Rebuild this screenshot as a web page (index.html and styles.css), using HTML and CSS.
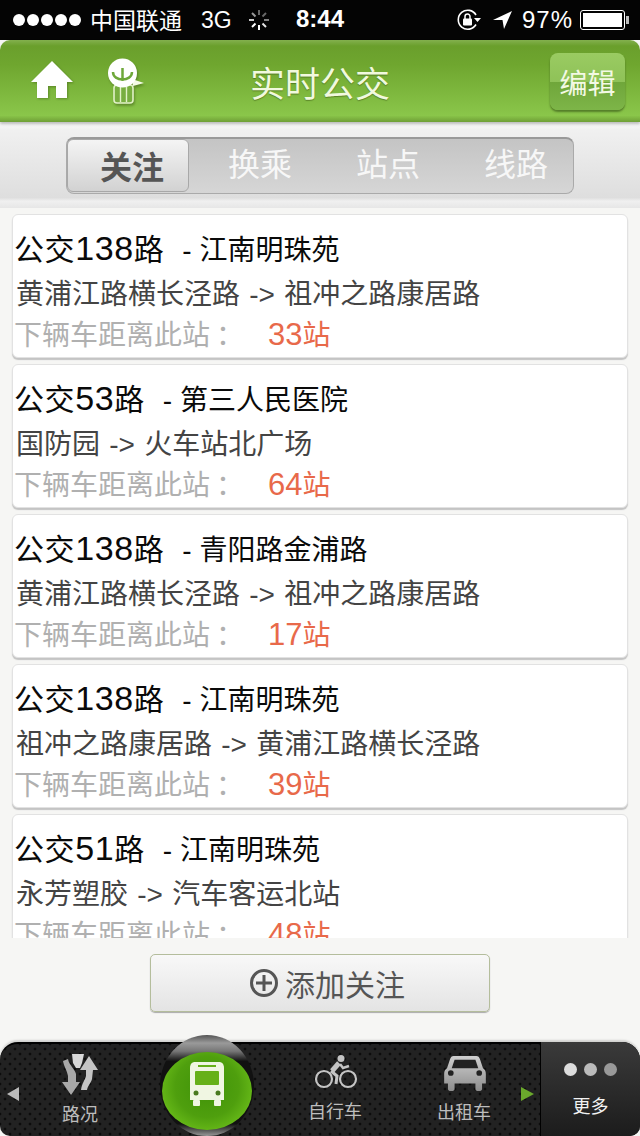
FILE: index.html
```html
<!DOCTYPE html>
<html lang="zh-CN">
<head>
    <meta charset="UTF-8">
    <meta name="viewport" content="width=device-width, initial-scale=1.0">
    <title>实时公交</title>
    <link rel="stylesheet" href="styles.css">
</head>
<body>
    <div class="statusbar">
        <div class="status-left">
            <span class="dots"><i></i><i></i><i></i><i></i><i></i></span>
            <span class="carrier">中国联通</span>
            <span class="net">3G</span>
            <svg class="spinner" width="22" height="22" viewBox="0 0 22 22" stroke="#fff" stroke-width="2">
                <path d="M11 1v5" stroke-opacity=".4"/><path d="M11 16v5"/><path d="M1 11h5" stroke-opacity=".8"/><path d="M16 11h5" stroke-opacity=".5"/>
                <path d="M4 4l3.500 3.500" stroke-opacity=".6"/><path d="M14.500 14.500L18 18" stroke-opacity=".9"/><path d="M18 4l-3.500 3.500" stroke-opacity=".4"/><path d="M7.500 14.500L4 18"/>
            </svg>
        </div>
        <div class="clock">8:44</div>
        <div class="status-right">
            <svg width="24" height="22" viewBox="0 0 24 22">
                <path d="M19 15.500A9.500 9.500 0 1 1 19 6" fill="none" stroke="#fff" stroke-width="1.600"/>
                <path d="M17 9h7l-3.500 4z" fill="#fff"/>
                <rect x="6" y="9.500" width="9" height="7" rx="1" fill="#fff"/>
                <path d="M8 10V7.500a2.500 2.500 0 0 1 5 0V10" fill="none" stroke="#fff" stroke-width="1.500"/>
            </svg>
            <svg class="arrow" width="20" height="20" viewBox="0 0 20 20"><path d="M0 10L19 1l-8 18-1.500-9z" fill="#fff"/></svg>
            <span class="percent">97%</span>
            <span class="battery"><b></b></span>
        </div>
    </div>

    <header class="topbar">
        <svg class="home-icon" width="44" height="40" viewBox="0 0 44 40">
            <path d="M22 1L43 22h-6v16H26V26h-8v12H7V22H1z" fill="#fff"/>
        </svg>
        <svg class="bulb-icon" width="40" height="48" viewBox="0 0 40 48">
            <rect x="8" y="28" width="19" height="18" rx="3" fill="#78ae40" stroke="#e2f2c8" stroke-width="1.600"/>
            <path d="M14.500 30v15M20.500 30v15" stroke="#e2f2c8" stroke-width="1.400"/>
            <path d="M26 22l12 4-11 3z" fill="#f4fae6"/>
            <circle cx="16.500" cy="16" r="14.500" fill="#fff"/>
            <path d="M7 15c0 10 19 10 19 0M16.500 11v13" fill="none" stroke="#6ea83a" stroke-width="2.500"/>
        </svg>
        <h1 class="title">实时公交</h1>
        <a class="edit-btn">编辑</a>
    </header>

    <div class="tabs-wrap">
        <div class="tabs">
            <div class="tab active">关注</div>
            <div class="tab">换乘</div>
            <div class="tab">站点</div>
            <div class="tab">线路</div>
        </div>
    </div>

    <div class="list">
        <div class="card">
            <p class="line"><span class="no">公交<b>138</b>路</span><span class="stop">- 江南明珠苑</span></p>
            <p class="route">黄浦江路横长泾路 -&gt; 祖冲之路康居路</p>
            <p class="next"><span class="next-label">下辆车距离此站<span class="colon">：</span></span><span class="count"><b>33</b>站</span></p>
        </div>
        <div class="card">
            <p class="line"><span class="no">公交<b>53</b>路</span><span class="stop">- 第三人民医院</span></p>
            <p class="route">国防园 -&gt; 火车站北广场</p>
            <p class="next"><span class="next-label">下辆车距离此站<span class="colon">：</span></span><span class="count"><b>64</b>站</span></p>
        </div>
        <div class="card">
            <p class="line"><span class="no">公交<b>138</b>路</span><span class="stop">- 青阳路金浦路</span></p>
            <p class="route">黄浦江路横长泾路 -&gt; 祖冲之路康居路</p>
            <p class="next"><span class="next-label">下辆车距离此站<span class="colon">：</span></span><span class="count"><b>17</b>站</span></p>
        </div>
        <div class="card">
            <p class="line"><span class="no">公交<b>138</b>路</span><span class="stop">- 江南明珠苑</span></p>
            <p class="route">祖冲之路康居路 -&gt; 黄浦江路横长泾路</p>
            <p class="next"><span class="next-label">下辆车距离此站<span class="colon">：</span></span><span class="count"><b>39</b>站</span></p>
        </div>
        <div class="card">
            <p class="line"><span class="no">公交<b>51</b>路</span><span class="stop">- 江南明珠苑</span></p>
            <p class="route">永芳塑胶 -&gt; 汽车客运北站</p>
            <p class="next"><span class="next-label">下辆车距离此站<span class="colon">：</span></span><span class="count"><b>48</b>站</span></p>
        </div>
    </div>

    <div class="add-wrap">
        <a class="add-btn">
            <svg width="30" height="30" viewBox="0 0 30 30" fill="none" stroke="#555" stroke-width="3">
                <circle cx="15" cy="15" r="12.500"/><path d="M7 15h16M15 7v16"/>
            </svg>
            添加关注
        </a>
    </div>

    <nav class="tabbar">
        <span class="tri tri-left"></span>
        <div class="nav-item road">
            <svg width="38" height="44" viewBox="0 0 38 44">
                <path d="M2 9L7 7C8 13 14 17 15 22V30H19L10 43 1 30H7V24C6 18 3 15 2 9z" fill="#a8a8a8"/>
                <path d="M11 2H23L21 11 19 16H15L12 11z" fill="#d8d8d8"/>
                <path d="M28 4L37 18H32L31 27C30 31 27 33 26 38H20C21 31 24 28 25 24V18H19z" fill="#c4c4c4"/>
            </svg>
            <span>路况</span>
        </div>
        <div class="nav-center">
            <div class="bus-ball">
                <svg width="36" height="44" viewBox="0 0 36 44">
                    <path d="M6 0h24c3 0 5 2 5 6v32H1V6c0-4 2-6 5-6z" fill="#f0f6e2"/>
                    <rect x="4" y="38" width="7" height="6" rx="1" fill="#f0f6e2"/><rect x="25" y="38" width="7" height="6" rx="1" fill="#f0f6e2"/>
                    <rect x="6" y="9" width="24" height="14" rx="1" fill="#66b018"/>
                    <rect x="9" y="3" width="18" height="2" fill="#66b018"/>
                    <circle cx="7" cy="31" r="2.500" fill="#4a7a20"/><circle cx="29" cy="31" r="2.500" fill="#4a7a20"/>
                </svg>
            </div>
        </div>
        <div class="nav-item bike">
            <svg width="44" height="34" viewBox="0 0 44 34" fill="none" stroke="#c4c4c4">
                <circle cx="10" cy="24" r="8" stroke-width="2.200"/><circle cx="34" cy="24" r="8" stroke-width="2.200"/>
                <circle cx="27" cy="3.500" r="3.500" fill="#c4c4c4" stroke="none"/>
                <path d="M25 8L18 16" stroke-width="5"/>
                <path d="M17 16L23 21 22 29" stroke-width="3"/>
                <path d="M26 9L29 13 35 11" stroke-width="2.500"/>
            </svg>
            <span>自行车</span>
        </div>
        <div class="nav-item car">
            <svg width="44" height="36" viewBox="0 0 44 38">
                <defs>
                    <linearGradient id="carBody" x1="0" y1="0" x2="0" y2="1">
                        <stop offset="0" stop-color="#d0d0d0"/>
                        <stop offset="1" stop-color="#8c8c8c"/>
                    </linearGradient>
                </defs>
                <path d="M10 1h24c2 0 3 1 4 4l3 9c2 1 3 3 3 6v10h-4v6c0 1-1 2-2 2h-3c-1 0-2-1-2-2v-6H11v6c0 1-1 2-2 2H6c-1 0-2-1-2-2v-6H0V20c0-3 1-5 3-6l3-9c1-3 2-4 4-4z" fill="url(#carBody)"/>
                <path d="M11 5h22l3 9H8z" fill="#222"/>
                <circle cx="7" cy="19" r="3" fill="#222"/><circle cx="37" cy="19" r="3" fill="#222"/>
            </svg>
            <span>出租车</span>
        </div>
        <span class="tri tri-right"></span>
        <div class="more">
            <span class="more-dots"><i></i><i></i><i></i></span>
            <span>更多</span>
        </div>
    </nav>
</body>
</html>
```

FILE: styles.css
```css
* {
    box-sizing: border-box;
}
html, body {
    margin: 0;
    padding: 0;
}
body {
    width: 640px;
    height: 1136px;
    overflow: hidden;
    display: flex;
    flex-direction: column;
    font-family: "Liberation Sans", "Noto Sans CJK SC", sans-serif;
    background-color: #f6f6f4;
}
p, h1 {
    margin: 0;
    font-weight: normal;
}

/* status bar */
.statusbar {
    height: 40px;
    flex: none;
    background: #040404;
    color: #fff;
    display: flex;
    align-items: center;
    justify-content: space-between;
    font-size: 24px;
    position: relative;
}
.status-left {
    display: flex;
    align-items: center;
    padding-left: 13px;
    font-size: 23px;
}
.dots {
    display: flex;
    gap: 2px;
    margin-right: 9px;
}
.dots i {
    width: 12px;
    height: 12px;
    border-radius: 50%;
    background: #fff;
}
.carrier {
    margin-right: 19px;
    padding-bottom: 2px;
}
.spinner {
    margin-left: 16px;
}
.clock {
    position: absolute;
    left: 296px;
    top: 5px;
    font-weight: bold;
}
.status-right {
    display: flex;
    align-items: center;
    padding-right: 15px;
}
.arrow {
    margin-left: 12px;
}
.percent {
    margin-left: 9px;
    letter-spacing: 1px;
}
.battery {
    width: 45px;
    height: 20px;
    border: 1px solid #fff;
    border-radius: 3px;
    margin-left: 7px;
    padding: 2px;
    position: relative;
    display: flex;
}
.battery b {
    flex: 1;
    background: #fff;
}
.battery::after {
    content: "";
    position: absolute;
    right: -5px;
    top: 5px;
    width: 3px;
    height: 8px;
    background: #bbb;
}

/* green header */
.topbar {
    height: 82px;
    flex: none;
    background: linear-gradient(#83b04e 0, #6a9f2c 6px, #6fa62f 30%, #8ac64a 92%, #6f9f36 100%);
    border-radius: 10px 10px 0 0;
    position: relative;
    display: flex;
    align-items: center;
    justify-content: center;
    box-shadow: 0 2px 3px rgba(0, 0, 0, .25);
    z-index: 2;
}
.home-icon {
    position: absolute;
    left: 30px;
    top: 20px;
    filter: drop-shadow(1px 1px 1px rgba(60, 90, 20, .5));
}
.bulb-icon {
    position: absolute;
    left: 106px;
    top: 17px;
    filter: drop-shadow(1px 2px 1px rgba(60, 90, 20, .5));
}
.title {
    font-size: 35px;
    color: #f1f9de;
    text-shadow: 0 1px 1px rgba(60, 90, 20, .6);
}
.edit-btn {
    position: absolute;
    right: 15px;
    top: 13px;
    width: 75px;
    height: 57px;
    border-radius: 8px;
    background: linear-gradient(#9acb62 0, #8fc258 50%, #6fa63a 51%, #7db548 100%);
    box-shadow: 0 2px 2px rgba(50, 80, 20, .6);
    color: #f3f9e4;
    font-size: 28px;
    display: flex;
    align-items: center;
    justify-content: center;
}

/* segmented tabs */
.tabs-wrap {
    height: 86px;
    flex: none;
    background: linear-gradient(#fafafa 0, #f0f0f0 10%, #dedede 88%, #f0f0f0 92%, #e6e6e6 100%);
    padding: 15px 66px 0;
}
.tabs {
    height: 57px;
    display: flex;
    border-radius: 8px;
    border: 1px solid #aaa;
    border-top: 2px solid #999;
    background: linear-gradient(#c4c4c4, #d6d6d6);
}
.tab {
    width: 128px;
    display: flex;
    align-items: center;
    justify-content: center;
    font-size: 32px;
    color: #f7f7f7;
    padding: 0 0 8px 14px;
}
.tab.active {
    width: 122px;
    height: 53px;
    background: linear-gradient(#f4f4f4, #d2d2d2);
    border-radius: 6px;
    border: 1px solid #a8a8a8;
    color: #555;
    font-weight: bold;
    padding: 0 0 2px 8px;
}

/* bus cards */
.list {
    height: 730px;
    flex: none;
    overflow: hidden;
    padding: 6px 12px 0;
    display: flex;
    flex-direction: column;
    gap: 6px;
}
.card {
    height: 144px;
    flex: none;
    background: #fff;
    border: 1px solid #e2e2e2;
    border-radius: 6px;
    box-shadow: 0 2px 1px #c4c4c4;
    padding: 12px 0 0 1px;
}
.line {
    height: 42px;
    line-height: 42px;
    color: #0a0a0a;
    font-size: 28px;
    white-space: nowrap;
}
.no {
    font-size: 30px;
    letter-spacing: .6px;
    margin-right: 18px;
}
.no b {
    font-weight: normal;
    font-size: 34px;
}
.route {
    height: 44px;
    line-height: 48px;
    margin-top: 2px;
    color: #444;
    font-size: 28px;
    padding-left: 2px;
    white-space: nowrap;
    word-spacing: 1.500px;
}
.next {
    height: 40px;
    line-height: 38px;
    margin-top: -1px;
    font-size: 28px;
    color: #b0b0b0;
    display: flex;
    align-items: baseline;
}
.next-label {
    width: 254px;
    flex: none;
}
.colon {
    font-family: "Noto Sans CJK TC", sans-serif;
    padding-left: 6px;
}
.count {
    color: #e8694a;
}
.count b {
    font-weight: normal;
    font-size: 31px;
}

/* add button */
.add-wrap {
    flex: 1;
    display: flex;
    justify-content: center;
    padding-top: 16px;
}
.add-btn {
    width: 340px;
    height: 58px;
    border: 1px solid #b4bd9c;
    border-radius: 5px;
    background: linear-gradient(#f8f8f8, #e4e4e4);
    box-shadow: 0 1px 1px #aaa;
    display: flex;
    align-items: center;
    justify-content: center;
    gap: 6px;
    font-size: 30px;
    color: #555;
    padding-left: 14px;
}

/* bottom nav */
.tabbar {
    height: 94px;
    flex: none;
    position: relative;
    display: flex;
    border-radius: 18px 18px 10px 10px;
    background-color: #222;
    background-image: radial-gradient(circle, #0c0c0c 1.200px, transparent 1.700px), radial-gradient(circle, #0c0c0c 1.200px, transparent 1.700px);
    background-size: 10px 10px;
    background-position: 0 0, 5px 5px;
    border-top: 2px solid #000;
    box-shadow: 0 -2px 2px rgba(0, 0, 0, .15);
    font-size: 18px;
    line-height: 24px;
    color: #bdbdbd;
}
.nav-item {
    position: absolute;
    display: flex;
    flex-direction: column;
    align-items: center;
    top: 11px;
    width: 90px;
}
.road {
    left: 35px;
    top: 8px;
}
.road span {
    margin-top: 7px;
}
.bike {
    left: 291px;
}
.bike span {
    margin-top: 11px;
}
.bike span, .car span {
    position: relative;
    left: -1px;
}
.car {
    left: 420px;
}
.car span {
    margin-top: 10px;
}
.nav-center {
    position: absolute;
    left: 160px;
    top: -9px;
    width: 94px;
    height: 101px;
    border-radius: 50%;
    background: linear-gradient(#555 0, #9a9a9a 8%, #777 16%, #111 26%, #111 88%, #999 100%);
    padding: 17px 2px 0;
}
.bus-ball {
    height: 78px;
    border-radius: 50%;
    background: radial-gradient(ellipse at 50% 45%, #3f9208 0, #4f9f0e 50%, #62b416 70%, #8bd62c 88%, #2f6a08 100%);
    display: flex;
    align-items: center;
    justify-content: center;
    padding-bottom: 14px;
}
.tri {
    position: absolute;
    width: 0;
    height: 0;
    top: 43px;
    border-top: 7px solid transparent;
    border-bottom: 7px solid transparent;
}
.tri-left {
    left: 7px;
    border-right: 12px solid #bbb;
}
.tri-right {
    left: 521px;
    border-left: 13px solid #6aa82c;
}
.more {
    position: absolute;
    right: 0;
    top: -2px;
    width: 100px;
    height: 94px;
    background: linear-gradient(#3a3a3a, #1c1c1c);
    border-left: 1px solid #000;
    border-radius: 0 18px 10px 0;
    color: #f2f2f2;
    display: flex;
    flex-direction: column;
    align-items: center;
    padding-top: 21px;
    gap: 19px;
}
.more-dots {
    display: flex;
    gap: 7px;
}
.more-dots i {
    width: 13px;
    height: 13px;
    border-radius: 50%;
    background: #bbb;
}
.more-dots i:first-child {
    background: #ddd;
}
.more-dots i:last-child {
    background: #999;
}
```
